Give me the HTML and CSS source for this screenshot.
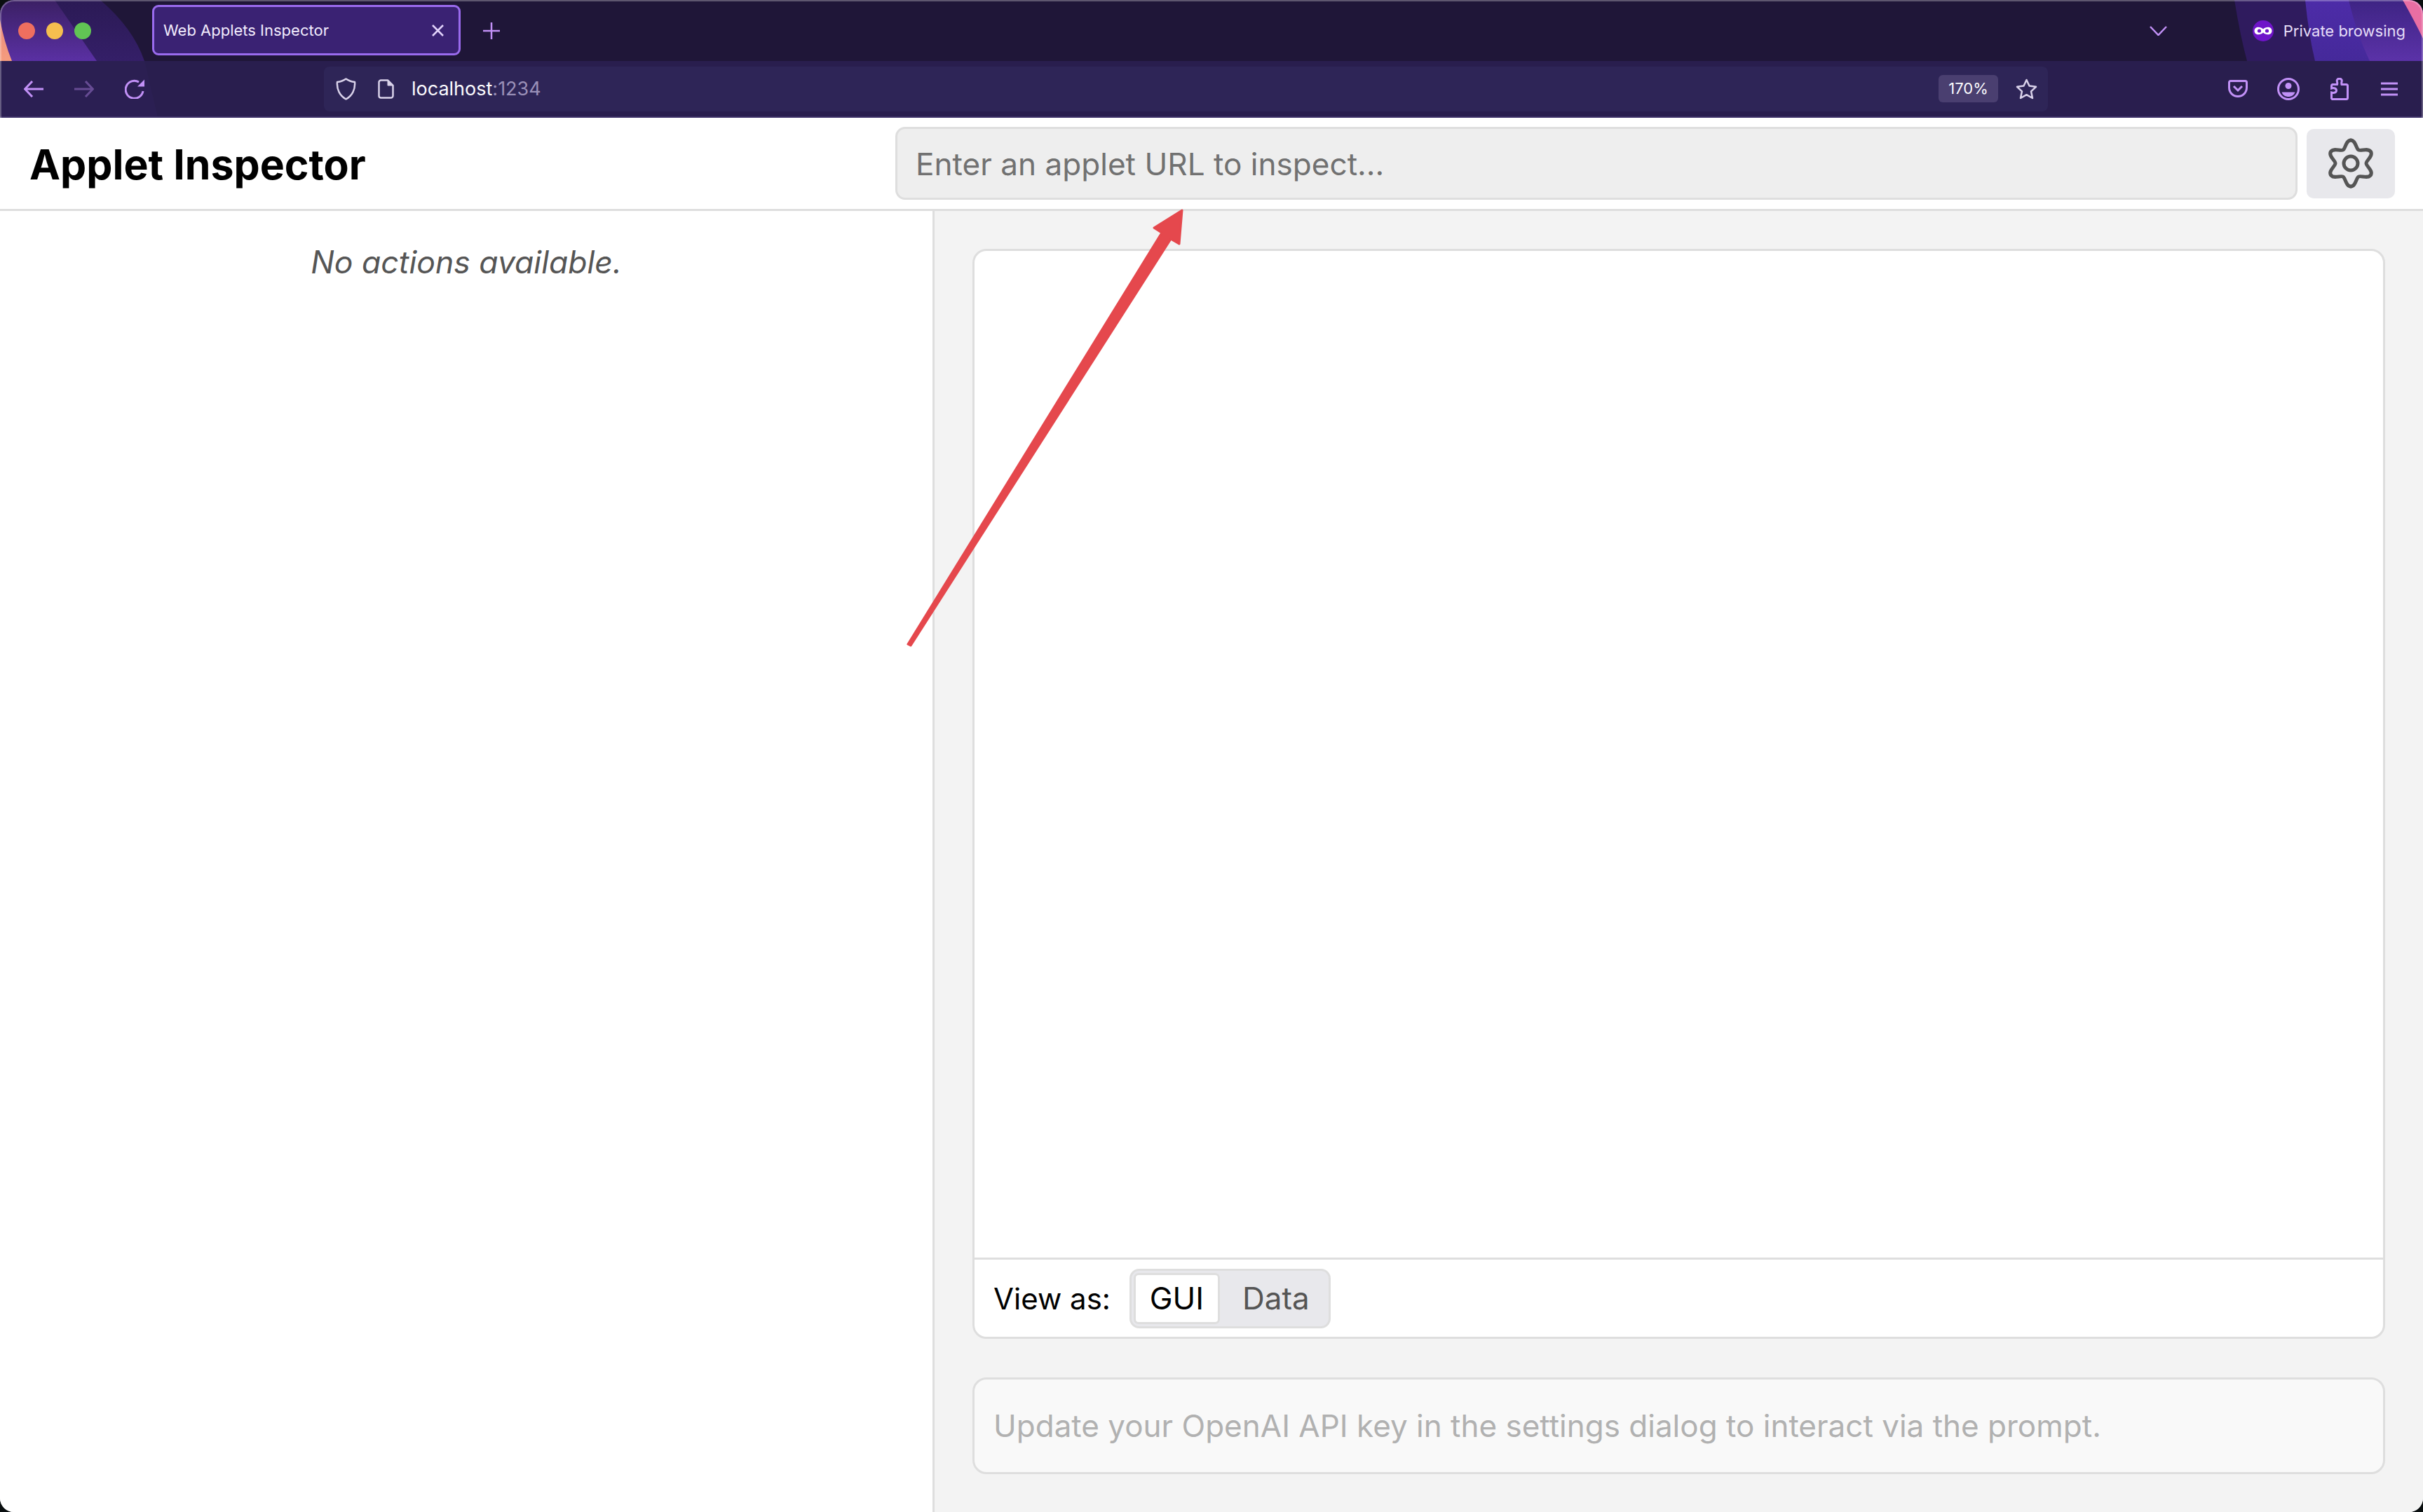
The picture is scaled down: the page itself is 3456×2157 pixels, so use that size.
FILE: index.html
```html
<!DOCTYPE html>
<html lang="en">
<head>
  <meta charset="UTF-8" />
  <title>Web Applets Inspector</title>
  <link rel="stylesheet" href="styles.css">
</head>
<body>
  <div class="window">
    <div class="chrome">
      <!-- private browsing artwork behind the toolbars -->
      <svg class="chrome-art" width="3456" height="168" viewBox="0 0 3456 168">
        <defs>
          <linearGradient id="artA" x1="0" y1="0" x2="0" y2="1">
            <stop offset="0" stop-color="#3b2064" />
            <stop offset="1" stop-color="#5a30a3" />
          </linearGradient>
          <linearGradient id="artB" x1="0" y1="0" x2="0" y2="1">
            <stop offset="0" stop-color="#2b1a55" />
            <stop offset="1" stop-color="#3d2379" />
          </linearGradient>
          <linearGradient id="artC" x1="0" y1="0" x2="0" y2="1">
            <stop offset="0" stop-color="#4d2ca8" />
            <stop offset="1" stop-color="#45299a" />
          </linearGradient>
          <linearGradient id="artD" x1="0" y1="0" x2="0" y2="1">
            <stop offset="0" stop-color="#3e2484" />
            <stop offset="1" stop-color="#5b32a8" />
          </linearGradient>
          <linearGradient id="artPeach" x1="0" y1="0" x2="0" y2="1">
            <stop offset="0" stop-color="#e88a7c" />
            <stop offset="1" stop-color="#f59c7e" />
          </linearGradient>
        </defs>
        <path d="M143 0 Q190 40 206 87 L225 168 L0 168 L0 0 Z" fill="url(#artB)" />
        <path d="M0 0 L78 0 L138 87 L0 87 Z" fill="url(#artA)" />
        <path d="M0 28 Q6 60 17 87 L0 87 Z" fill="url(#artPeach)" />
        <path d="M3187 0 Q3195 50 3205 87 L3456 87 L3456 0 Z" fill="#2f1b5e" />
        <path d="M3288 0 Q3293 50 3302 87 L3456 87 L3456 0 Z" fill="url(#artC)" />
        <path d="M3350 0 Q3362 50 3380 87 L3456 87 L3456 0 Z" fill="url(#artD)" />
        <path d="M3427 0 L3456 0 L3456 55 Q3444 30 3427 0 Z" fill="#e86ea3" />
      </svg>

      <div class="tabbar">
        <div class="traffic-lights">
          <span class="light light-red"></span>
          <span class="light light-yellow"></span>
          <span class="light light-green"></span>
        </div>
        <div class="tab">
          <span class="tab-title">Web Applets Inspector</span>
          <svg class="icon-close" width="17" height="17" viewBox="0 0 17 17">
            <path d="M1 1 L16 16 M16 1 L1 16" />
          </svg>
        </div>
        <svg class="icon-plus" width="24" height="24" viewBox="0 0 24 24">
          <path d="M12 0 V24 M0 12 H24" />
        </svg>
        <div class="tabbar-right">
          <svg class="icon-chevron" width="25" height="14" viewBox="0 0 25 14">
            <path d="M1 1 L12.500 13 L24 1" />
          </svg>
          <div class="private-label">
            <svg width="30" height="30" viewBox="0 0 30 30">
              <circle cx="15" cy="15" r="15" fill="#6f14c9" />
              <path d="M2.500 15 C2.500 8.500 11 8.500 15 12.500 C19 8.500 27.500 8.500 27.500 15 C27.500 21.500 19 21.500 15 17.500 C11 21.500 2.500 21.500 2.500 15 Z" fill="#fff" />
              <circle cx="9.500" cy="15" r="2.600" fill="#6f14c9" />
              <circle cx="20.500" cy="15" r="2.600" fill="#6f14c9" />
            </svg>
            <span>Private browsing</span>
          </div>
        </div>
      </div>

      <div class="toolbar">
        <div class="nav-buttons">
          <svg class="tool-icon" width="28" height="24" viewBox="0 0 28 24">
            <path d="M12 1 L1.500 12 L12 23 M2 12 H28" />
          </svg>
          <svg class="tool-icon is-disabled" width="28" height="24" viewBox="0 0 28 24">
            <path d="M16 1 L26.500 12 L16 23 M26 12 H0" />
          </svg>
          <svg class="tool-icon" width="28" height="28" viewBox="0 0 28 28">
            <path d="M26 17 A12.500 12.500 0 1 1 20 4" />
            <path class="solid" d="M28 0.500 V10.500 H18 Z" />
          </svg>
        </div>

        <div class="urlbar">
          <svg class="url-icon" width="29" height="32" viewBox="0 0 29 32">
            <path d="M14.500 1.500 C18 4 22 5.500 27 6 C28 17 23 26 14.500 30.500 C6 26 1 17 2 6 C7 5.500 11 4 14.500 1.500 Z" />
          </svg>
          <svg class="url-icon url-doc" width="23" height="28" viewBox="0 0 23 28">
            <path d="M4 1.500 H14 L21.500 9 V23.500 A3 3 0 0 1 18.500 26.500 H4 A3 3 0 0 1 1.500 23.500 V4 A3 3 0 0 1 4 1.500 Z" />
            <path class="solid-doc" d="M14 1.500 L21.500 9 H14 Z" />
          </svg>
          <span class="url-text">localhost<span class="url-port">:1234</span></span>
          <span class="zoom-chip">170%</span>
          <svg class="url-icon url-star" width="31" height="30" viewBox="0 0 31 30">
            <path d="M15.500 2 L19.500 10.500 L29 11.800 L22 18.300 L24 28 L15.500 23.200 L7 28 L9 18.300 L2 11.800 L11.500 10.500 Z" />
          </svg>
        </div>

        <div class="toolbar-right">
          <svg class="tool-icon" width="28" height="25" viewBox="0 0 28 25">
            <path d="M3.500 1.500 H24.500 A2 2 0 0 1 26.500 3.500 V11 C26.500 18 21 23.500 14 23.500 C7 23.500 1.500 18 1.500 11 V3.500 A2 2 0 0 1 3.500 1.500 Z M8 9 L14 15 L20 9" />
          </svg>
          <svg class="tool-icon" width="32" height="32" viewBox="0 0 32 32">
            <circle cx="16" cy="16" r="14.500" />
            <circle class="solid" cx="16" cy="11.500" r="4.500" />
            <path class="solid" d="M6.500 20.500 H25.500 C24 25 20 27 16 27 C12 27 8 25 6.500 20.500 Z" />
          </svg>
          <svg class="tool-icon icon-puzzle" width="26" height="32" viewBox="0 0 26 32">
            <path d="M2.500 30.500 H22.500 A2 2 0 0 0 24.500 28.500 V11.500 A2 2 0 0 0 22.500 9.500 H16 C15 6 17 5 16 3 C14.500 0.500 10.500 0.500 9.500 3 C8.500 5 10.500 6 9.500 9.500 H3 A2 2 0 0 0 1.500 11.500 V15 C5 14 8.500 15 8.500 18 C8.500 21 5 22 1.500 21 V29.500 Z" />
          </svg>
          <svg class="tool-icon icon-menu" width="24" height="20" viewBox="0 0 24 20">
            <path d="M0 2 H24 M0 10 H24 M0 18 H24" />
          </svg>
        </div>
      </div>
    </div>

    <div class="app">
      <header class="app-header">
        <h1 class="app-title">Applet Inspector</h1>
        <input class="url-input" type="text" placeholder="Enter an applet URL to inspect..." />
        <button class="settings-btn" type="button" aria-label="Settings">
          <svg width="72" height="72" viewBox="-36 -36 72 72">
            <defs>
              <path id="gearLobe" d="M0 -33 C7 -33 7.540 -21.050 11 -19.050 C14.460 -17.050 25.080 -22.560 28.580 -16.500" />
            </defs>
            <use href="#gearLobe" />
            <use href="#gearLobe" transform="rotate(60)" />
            <use href="#gearLobe" transform="rotate(120)" />
            <use href="#gearLobe" transform="rotate(180)" />
            <use href="#gearLobe" transform="rotate(240)" />
            <use href="#gearLobe" transform="rotate(300)" />
            <circle r="10" />
          </svg>
        </button>
      </header>

      <main class="app-main">
        <aside class="actions-panel">
          <p class="no-actions">No actions available.</p>
        </aside>
        <section class="viewer-panel">
          <div class="viewer-card">
            <div class="viewer-frame"></div>
            <div class="viewer-footer">
              <span class="view-label">View as:</span>
              <div class="toggle-group">
                <button class="toggle-btn is-active" type="button">GUI</button>
                <button class="toggle-btn" type="button">Data</button>
              </div>
            </div>
          </div>
          <div class="prompt-box">Update your OpenAI API key in the settings dialog to interact via the prompt.</div>
        </section>
      </main>
    </div>

    <!-- annotation drawn over the screenshot -->
    <svg class="annotation" width="3456" height="2157" viewBox="0 0 3456 2157">
      <path d="M1686 300 L1682 348 L1670 341 L1299 921 L1295 919 L1657 332 L1646 325 Z" />
    </svg>
  </div>
</body>
</html>
```

FILE: styles.css
```css
:root {
  --purple-icon: #c291f7;
  --border: #dedede;
  --panel-bg: #f3f3f3;
}

* {
  box-sizing: border-box;
}

html, body {
  margin: 0;
  height: 100%;
}

body {
  background: #0a0f10;
  font-family: 'Inter', 'Liberation Sans', sans-serif;
  overflow: hidden;
}

.window {
  position: relative;
  display: flex;
  flex-direction: column;
  height: 2157px;
  border-radius: 20px;
  overflow: hidden;
  background: #fff;
}

/* Browser chrome */
.chrome {
  position: relative;
  height: 168px;
  flex: none;
  background: #1f1638;
  color: #fbfbfe;
}

.chrome::after {
  content: "";
  position: absolute;
  top: 0;
  left: 0;
  right: 0;
  bottom: 0;
  border: solid rgba(255, 255, 255, 0.28);
  border-width: 2px 2px 0;
  border-radius: 20px 20px 0 0;
  pointer-events: none;
}

.chrome-art {
  position: absolute;
  top: 0;
  left: 0;
}

.tabbar,
.toolbar {
  position: relative;
  display: flex;
  align-items: center;
}

.tabbar {
  height: 87px;
  padding-left: 26px;
}

.traffic-lights {
  display: flex;
  gap: 16px;
  width: 191px;
  flex: none;
}

.light {
  width: 24px;
  height: 24px;
  border-radius: 50%;
}

.light-red { background: #ef6f5f; }
.light-yellow { background: #f5be4f; }
.light-green { background: #61c554; }

.tab {
  display: flex;
  align-items: center;
  justify-content: space-between;
  width: 440px;
  height: 72px;
  margin-bottom: 1px;
  padding: 0 21px 0 13px;
  background: #3a2273;
  border: 3px solid #9a6bee;
  border-radius: 9px;
  font-size: 22px;
  color: #f1ebfc;
}

.icon-close path,
.icon-plus path,
.icon-chevron path {
  fill: none;
  stroke: #e2d3fb;
  stroke-width: 2.500;
}

.icon-plus {
  margin-left: 32px;
}

.icon-plus path,
.icon-chevron path {
  stroke: var(--purple-icon);
}

.tabbar-right {
  display: flex;
  align-items: center;
  margin-left: auto;
}

.private-label {
  display: flex;
  align-items: center;
  gap: 14px;
  margin-left: 122px;
  padding-right: 25px;
  font-size: 22px;
  color: #e6def8;
}

.toolbar {
  height: 81px;
  background: rgba(42, 31, 80, 0.92);
  border-bottom: 2px solid #3d3168;
}

.nav-buttons {
  display: flex;
  align-items: center;
  gap: 44px;
  width: 462px;
  padding-left: 34px;
  flex: none;
}

.tool-icon {
  flex: none;
  fill: none;
  stroke: var(--purple-icon);
  stroke-width: 3;
}

.tool-icon .solid {
  fill: var(--purple-icon);
  stroke: none;
}

.tool-icon.is-disabled {
  opacity: 0.4;
}

.urlbar {
  display: flex;
  align-items: center;
  width: 2459px;
  height: 64px;
  padding-left: 17px;
  padding-right: 15px;
  background: #2e2557;
  border-radius: 8px;
  flex: none;
}

.url-icon {
  flex: none;
  fill: none;
  stroke: #d9d2ea;
  stroke-width: 2.500;
  stroke-linejoin: round;
}

.solid-doc {
  fill: #d9d2ea;
  stroke-width: 1;
}

.url-doc {
  margin-left: 31px;
}

.url-text {
  margin-left: 25px;
  font-size: 27px;
}

.url-port {
  color: #9a90b8;
}

.zoom-chip {
  margin-left: auto;
  width: 85px;
  height: 39px;
  line-height: 39px;
  text-align: center;
  background: #4a3f70;
  border-radius: 6px;
  font-size: 22px;
}

.url-star {
  margin-left: 25px;
}

.toolbar-right {
  display: flex;
  align-items: center;
  gap: 42px;
  margin-left: 257px;
}

.icon-puzzle {
  margin-left: 2px;
}

.icon-menu {
  margin-left: 4px;
}

/* Inspector app */
.app {
  display: flex;
  flex-direction: column;
  flex: 1;
  min-height: 0;
  color: #000;
}

.app-header {
  display: flex;
  align-items: center;
  height: 133px;
  padding: 0 40px 0 42px;
  background: #fff;
  border-bottom: 3px solid var(--border);
  flex: none;
}

.app-title {
  width: 1235px;
  margin: 0;
  padding-top: 2px;
  font-size: 59px;
  font-weight: 700;
  flex: none;
}

.url-input {
  width: 2000px;
  height: 104px;
  margin-right: 13px;
  padding: 2px 26px 0;
  font-family: inherit;
  font-size: 44.100px;
  color: #000;
  background: #eee;
  border: 3px solid var(--border);
  border-radius: 14px;
  flex: none;
}

.url-input::placeholder {
  color: #717171;
  opacity: 1;
}

.settings-btn {
  display: flex;
  align-items: center;
  justify-content: center;
  width: 126px;
  height: 99px;
  padding: 0;
  background: #e8e8ec;
  border: none;
  border-radius: 10px;
  flex: none;
}

.settings-btn svg {
  fill: none;
  stroke: #555;
  stroke-width: 5;
  stroke-linecap: round;
}

.app-main {
  display: flex;
  flex: 1;
  min-height: 0;
}

.actions-panel {
  width: 1333px;
  padding-top: 46px;
  background: #fff;
  border-right: 3px solid var(--border);
  flex: none;
}

.no-actions {
  margin: 0;
  text-align: center;
  font-size: 44.500px;
  font-style: italic;
  color: #555;
}

.viewer-panel {
  display: flex;
  flex-direction: column;
  gap: 55px;
  flex: 1;
  padding: 54px;
  background: var(--panel-bg);
}

.viewer-card {
  display: flex;
  flex-direction: column;
  flex: 1;
  background: #fff;
  border: 3px solid var(--border);
  border-radius: 20px;
}

.viewer-frame {
  flex: 1;
  border-bottom: 3px solid var(--border);
}

.viewer-footer {
  display: flex;
  align-items: center;
  gap: 27px;
  height: 110px;
  padding-left: 27px;
}

.view-label {
  font-size: 42px;
}

.toggle-group {
  display: flex;
  align-items: center;
  gap: 8px;
  width: 287px;
  height: 85px;
  padding: 3px;
  background: #e8e8ec;
  border: 3px solid var(--border);
  border-radius: 14px;
}

.toggle-btn {
  height: 73px;
  padding: 0;
  font-family: inherit;
  font-size: 44px;
  color: #555;
  background: none;
  border: none;
  border-radius: 7px;
  flex: 1;
}

.toggle-btn.is-active {
  flex: none;
  width: 123px;
  color: #000;
  background: #fff;
  border: 3px solid var(--border);
}

.prompt-box {
  display: flex;
  align-items: center;
  height: 138px;
  padding-left: 27px;
  font-size: 44px;
  color: #b1b1b1;
  background: #f9f9f9;
  border: 3px solid var(--border);
  border-radius: 20px;
  flex: none;
}

.annotation {
  position: absolute;
  top: 0;
  left: 0;
  pointer-events: none;
}

.annotation path {
  fill: #e5484d;
  stroke: #e5484d;
  stroke-width: 3;
  stroke-linejoin: round;
}
```
